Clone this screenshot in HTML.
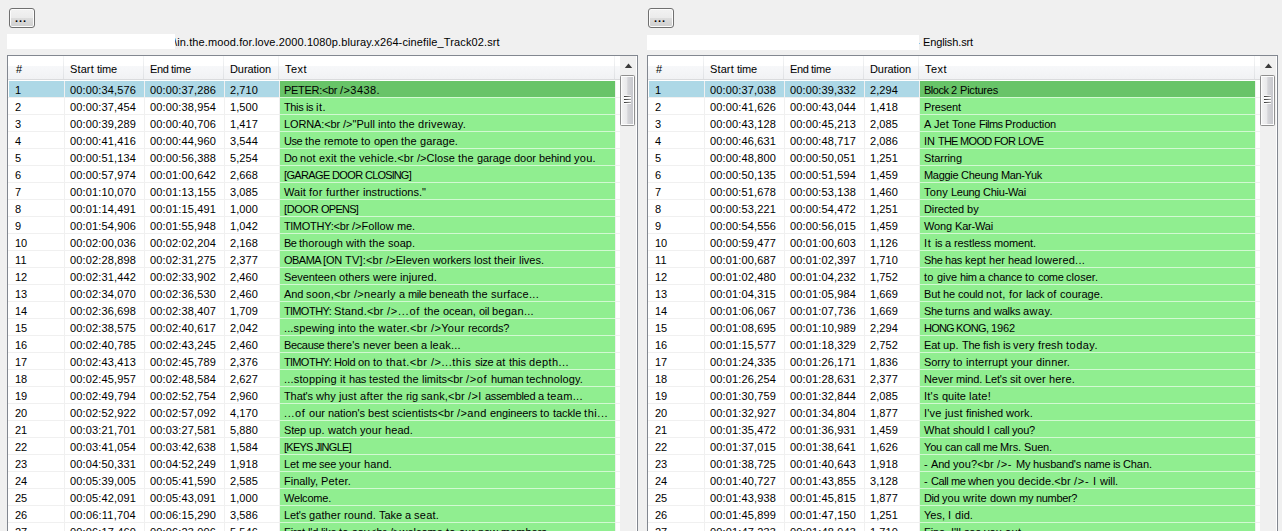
<!DOCTYPE html>
<html><head><meta charset="utf-8"><title>Compare subtitles</title>
<style>
html,body{margin:0;padding:0}
body{width:1282px;height:531px;overflow:hidden;background:#f0f0f0;position:relative;
 font-family:"Liberation Sans",sans-serif;font-size:11px;color:#000;}
.abs{position:absolute}
.btn{position:absolute;top:8px;width:24px;height:18px;border:1px solid #707070;border-radius:3px;
 background:linear-gradient(#f2f2f2 0%,#ebebeb 48%,#dddddd 50%,#cfcfcf 100%);
 box-shadow:inset 0 0 0 1px #fcfcfc;}
.btn span{position:absolute;left:5px;top:2px;line-height:14px;letter-spacing:1px;font-weight:bold}
.lbl{position:absolute;height:15px;line-height:17px;white-space:nowrap}
.lbl .t{position:absolute;white-space:pre}
.lbl .red{position:absolute;left:0;top:0;height:15px;background:#fff}
.lv{position:absolute;top:55px;width:629px;height:480px;border:1px solid #828790;background:#fff;overflow:hidden}
.hdr{position:absolute;left:0;top:0;height:23px;width:612px;background:linear-gradient(#fff 0px,#fff 10px,#f7f8fa 10px,#f1f2f4 23px);border-bottom:1px solid #dadbdd}
.hc{position:absolute;top:0;height:23px;line-height:26px;box-sizing:border-box;padding-left:6px;white-space:nowrap;overflow:hidden;color:#000}
.hc:after{content:'';position:absolute;right:0;top:0;width:1px;height:23px;background:linear-gradient(#f4f5f6,#dfe1e4)}
.hc:first-child{padding-left:8px}
.row{position:absolute;left:0;height:17px;width:612px;}
.c{position:absolute;top:0;height:16px;line-height:18px;box-sizing:border-box;padding-left:5px;white-space:nowrap;overflow:hidden;}
.c0{padding-left:6px}
.row{border-bottom:0}
.gl{position:absolute;left:0;width:612px;height:1px;background:#f0f0f0}
.c0{left:1px;width:55px}
.c1{left:57px;width:79px}
.c2{left:137px;width:79px}
.c3{left:217px;width:54px}
.c4{left:272px;width:335px;height:17px;background:#90ee90;padding-left:4px;border-bottom:1px solid #d2f9d2;z-index:2}
.vg{position:absolute;top:25px;width:1px;height:460px;background:#f0f0f0}
.sel .c0,.sel .c1,.sel .c2,.sel .c3{background:#add8e6}
.sel .c4{background:#68c468}
.sb{position:absolute;left:612px;top:0;width:16px;height:480px;background:#f0f0f0}
.thumb{position:absolute;left:0px;top:19px;width:13px;height:49px;border:1px solid #8f8f8f;border-radius:1.5px;
 background:linear-gradient(90deg,#f4f4f4 0%,#e9e9eb 45%,#d5d5d9 52%,#c3c4ca 100%);box-shadow:inset 0 0 0 1px #fdfdfd}
.grip{position:absolute;left:3px;width:7px;height:1px;background:linear-gradient(90deg,#333 0%,#666 50%,#aaa 100%);box-shadow:0 1px 0 #fff, 0 -1px 0 rgba(255,255,255,.6)}
.arrow{position:absolute;left:0;top:0}
</style></head>
<body>
<div class="btn" style="left:9px"><span>...</span></div>
<div class="btn" style="left:648px"><span>...</span></div>
<div class="lbl" style="left:7px;top:34px;width:630px"><span class="t" style="left:167px;top:0"><span style="letter-spacing:0.12px">\in.the.mood.for.love.2000.1080p.bluray.x264-cinefile_Track02.srt</span></span><div class="red" style="width:168px"></div></div>
<div class="lbl" style="left:647px;top:35px;width:630px"><span class="t" style="left:269px;top:-1px"><span style="letter-spacing:0.13px">- </span><span style="letter-spacing:-0.12px">English.srt</span></span><div class="red" style="width:272px"></div></div>
<div class="lv" style="left:7px">
<div class="hdr">
<div class="hc" style="left:0px;width:56px"><span style="letter-spacing:1.88px">#</span></div>
<div class="hc" style="left:56px;width:80px"><span style="letter-spacing:0.12px">Start </span><span style="letter-spacing:-0.2px">time</span></div>
<div class="hc" style="left:136px;width:80px"><span style="letter-spacing:-0.41px">End </span><span style="letter-spacing:-0.2px">time</span></div>
<div class="hc" style="left:216px;width:55px"><span style="letter-spacing:-0.07px">Duration</span></div>
<div class="hc" style="left:271px;width:336px"><span style="letter-spacing:0.45px">Text</span></div>
</div>
<div class="row sel" style="top:25px">
<div class="c c0"><span style="letter-spacing:-0.12px">1</span></div>
<div class="c c1"><span style="letter-spacing:0.15px">00:00:34,576</span></div>
<div class="c c2"><span style="letter-spacing:0.15px">00:00:37,286</span></div>
<div class="c c3"><span style="letter-spacing:0.09px">2,710</span></div>
<div class="c c4"><span style="letter-spacing:-0.3px">PETER:&lt;br </span><span style="letter-spacing:0.43px">/&gt;3438.</span></div>
</div>
<div class="gl" style="top:41px"></div>
<div class="row" style="top:42px">
<div class="c c0"><span style="letter-spacing:-0.12px">2</span></div>
<div class="c c1"><span style="letter-spacing:0.15px">00:00:37,454</span></div>
<div class="c c2"><span style="letter-spacing:0.15px">00:00:38,954</span></div>
<div class="c c3"><span style="letter-spacing:0.09px">1,500</span></div>
<div class="c c4"><span style="letter-spacing:-0.37px">This </span><span style="letter-spacing:-0.33px">is </span><span style="letter-spacing:0.48px">it.</span></div>
</div>
<div class="gl" style="top:58px"></div>
<div class="row" style="top:59px">
<div class="c c0"><span style="letter-spacing:-0.12px">3</span></div>
<div class="c c1"><span style="letter-spacing:0.15px">00:00:39,289</span></div>
<div class="c c2"><span style="letter-spacing:0.15px">00:00:40,706</span></div>
<div class="c c3"><span style="letter-spacing:0.09px">1,417</span></div>
<div class="c c4"><span style="letter-spacing:-0.12px">LORNA:&lt;br </span><span style="letter-spacing:0.03px">/&gt;&quot;Pull </span><span style="letter-spacing:0.04px">into </span><span style="letter-spacing:0.16px">the </span><span style="letter-spacing:0.26px">driveway.</span></div>
</div>
<div class="gl" style="top:75px"></div>
<div class="row" style="top:76px">
<div class="c c0"><span style="letter-spacing:-0.12px">4</span></div>
<div class="c c1"><span style="letter-spacing:0.15px">00:00:41,416</span></div>
<div class="c c2"><span style="letter-spacing:0.15px">00:00:44,960</span></div>
<div class="c c3"><span style="letter-spacing:0.09px">3,544</span></div>
<div class="c c4"><span style="letter-spacing:-0.41px">Use </span><span style="letter-spacing:0.16px">the </span><span style="letter-spacing:-0.04px">remote </span><span style="letter-spacing:0.26px">to </span><span style="letter-spacing:-0.11px">open </span><span style="letter-spacing:0.16px">the </span><span style="letter-spacing:0.1px">garage.</span></div>
</div>
<div class="gl" style="top:92px"></div>
<div class="row" style="top:93px">
<div class="c c0"><span style="letter-spacing:-0.12px">5</span></div>
<div class="c c1"><span style="letter-spacing:0.15px">00:00:51,134</span></div>
<div class="c c2"><span style="letter-spacing:0.15px">00:00:56,388</span></div>
<div class="c c3"><span style="letter-spacing:0.09px">5,254</span></div>
<div class="c c4"><span style="letter-spacing:-0.38px">Do </span><span style="letter-spacing:0.16px">not </span><span style="letter-spacing:0.16px">exit </span><span style="letter-spacing:0.16px">the </span><span style="letter-spacing:0.12px">vehicle.&lt;br </span><span style="letter-spacing:0.04px">/&gt;Close </span><span style="letter-spacing:0.16px">the </span><span style="letter-spacing:-0.04px">garage </span><span style="letter-spacing:-0.02px">door </span><span style="letter-spacing:-0.16px">behind </span><span style="letter-spacing:0.3px">you.</span></div>
</div>
<div class="gl" style="top:109px"></div>
<div class="row" style="top:110px">
<div class="c c0"><span style="letter-spacing:-0.12px">6</span></div>
<div class="c c1"><span style="letter-spacing:0.15px">00:00:57,974</span></div>
<div class="c c2"><span style="letter-spacing:0.15px">00:01:00,642</span></div>
<div class="c c3"><span style="letter-spacing:0.09px">2,668</span></div>
<div class="c c4"><span style="letter-spacing:-0.65px">[GARAGE </span><span style="letter-spacing:-0.61px">DOOR </span><span style="letter-spacing:-0.75px">CLOSlNG]</span></div>
</div>
<div class="gl" style="top:126px"></div>
<div class="row" style="top:127px">
<div class="c c0"><span style="letter-spacing:-0.12px">7</span></div>
<div class="c c1"><span style="letter-spacing:0.15px">00:01:10,070</span></div>
<div class="c c2"><span style="letter-spacing:0.15px">00:01:13,155</span></div>
<div class="c c3"><span style="letter-spacing:0.09px">3,085</span></div>
<div class="c c4"><span style="letter-spacing:0.07px">Wait </span><span style="letter-spacing:0.27px">for </span><span style="letter-spacing:0.27px">further </span><span style="letter-spacing:0.03px">instructions.&quot;</span></div>
</div>
<div class="gl" style="top:143px"></div>
<div class="row" style="top:144px">
<div class="c c0"><span style="letter-spacing:-0.12px">8</span></div>
<div class="c c1"><span style="letter-spacing:0.15px">00:01:14,491</span></div>
<div class="c c2"><span style="letter-spacing:0.15px">00:01:15,491</span></div>
<div class="c c3"><span style="letter-spacing:0.09px">1,000</span></div>
<div class="c c4"><span style="letter-spacing:-0.35px">[DOOR </span><span style="letter-spacing:-0.76px">OPENS]</span></div>
</div>
<div class="gl" style="top:160px"></div>
<div class="row" style="top:161px">
<div class="c c0"><span style="letter-spacing:-0.12px">9</span></div>
<div class="c c1"><span style="letter-spacing:0.15px">00:01:54,906</span></div>
<div class="c c2"><span style="letter-spacing:0.15px">00:01:55,948</span></div>
<div class="c c3"><span style="letter-spacing:0.09px">1,042</span></div>
<div class="c c4"><span style="letter-spacing:-0.22px">TlMOTHY:&lt;br </span><span style="letter-spacing:0.07px">/&gt;Follow </span><span style="letter-spacing:-0.11px">me.</span></div>
</div>
<div class="gl" style="top:177px"></div>
<div class="row" style="top:178px">
<div class="c c0"><span style="letter-spacing:-0.12px">10</span></div>
<div class="c c1"><span style="letter-spacing:0.15px">00:02:00,036</span></div>
<div class="c c2"><span style="letter-spacing:0.15px">00:02:02,204</span></div>
<div class="c c3"><span style="letter-spacing:0.09px">2,168</span></div>
<div class="c c4"><span style="letter-spacing:-0.51px">Be </span><span style="letter-spacing:0.06px">thorough </span><span style="letter-spacing:0.07px">with </span><span style="letter-spacing:0.16px">the </span><span style="letter-spacing:0.02px">soap.</span></div>
</div>
<div class="gl" style="top:194px"></div>
<div class="row" style="top:195px">
<div class="c c0"><span style="letter-spacing:0.29px">11</span></div>
<div class="c c1"><span style="letter-spacing:0.15px">00:02:28,898</span></div>
<div class="c c2"><span style="letter-spacing:0.15px">00:02:31,275</span></div>
<div class="c c3"><span style="letter-spacing:0.09px">2,377</span></div>
<div class="c c4"><span style="letter-spacing:-0.53px">OBAMA </span><span style="letter-spacing:-0.16px">[ON </span><span style="letter-spacing:0.2px">TV]:&lt;br </span><span style="letter-spacing:0.09px">/&gt;Eleven </span><span style="letter-spacing:-0.07px">workers </span><span style="letter-spacing:-0.04px">lost </span><span style="letter-spacing:0.09px">their </span><span style="letter-spacing:-0.01px">lives.</span></div>
</div>
<div class="gl" style="top:211px"></div>
<div class="row" style="top:212px">
<div class="c c0"><span style="letter-spacing:-0.12px">12</span></div>
<div class="c c1"><span style="letter-spacing:0.15px">00:02:31,442</span></div>
<div class="c c2"><span style="letter-spacing:0.15px">00:02:33,902</span></div>
<div class="c c3"><span style="letter-spacing:0.09px">2,460</span></div>
<div class="c c4"><span style="letter-spacing:-0.07px">Seventeen </span><span style="letter-spacing:0.05px">others </span><span style="letter-spacing:0.02px">were </span><span style="letter-spacing:0.12px">injured.</span></div>
</div>
<div class="gl" style="top:228px"></div>
<div class="row" style="top:229px">
<div class="c c0"><span style="letter-spacing:-0.12px">13</span></div>
<div class="c c1"><span style="letter-spacing:0.15px">00:02:34,070</span></div>
<div class="c c2"><span style="letter-spacing:0.15px">00:02:36,530</span></div>
<div class="c c3"><span style="letter-spacing:0.09px">2,460</span></div>
<div class="c c4"><span style="letter-spacing:-0.16px">And </span><span style="letter-spacing:0.2px">soon,&lt;br </span><span style="letter-spacing:0.28px">/&gt;nearly </span><span style="letter-spacing:-0.09px">a </span><span style="letter-spacing:-0.45px">mile </span><span style="letter-spacing:0.02px">beneath </span><span style="letter-spacing:0.16px">the </span><span style="letter-spacing:0.28px">surface...</span></div>
</div>
<div class="gl" style="top:245px"></div>
<div class="row" style="top:246px">
<div class="c c0"><span style="letter-spacing:-0.12px">14</span></div>
<div class="c c1"><span style="letter-spacing:0.15px">00:02:36,698</span></div>
<div class="c c2"><span style="letter-spacing:0.15px">00:02:38,407</span></div>
<div class="c c3"><span style="letter-spacing:0.09px">1,709</span></div>
<div class="c c4"><span style="letter-spacing:-0.49px">TlMOTHY: </span><span style="letter-spacing:0.19px">Stand.&lt;br </span><span style="letter-spacing:0.76px">/&gt;...of </span><span style="letter-spacing:0.16px">the </span><span style="letter-spacing:-0.01px">ocean, </span><span style="letter-spacing:-0.27px">oil </span><span style="letter-spacing:0.28px">began...</span></div>
</div>
<div class="gl" style="top:262px"></div>
<div class="row" style="top:263px">
<div class="c c0"><span style="letter-spacing:-0.12px">15</span></div>
<div class="c c1"><span style="letter-spacing:0.15px">00:02:38,575</span></div>
<div class="c c2"><span style="letter-spacing:0.15px">00:02:40,617</span></div>
<div class="c c3"><span style="letter-spacing:0.09px">2,042</span></div>
<div class="c c4"><span style="letter-spacing:0.13px">...spewing </span><span style="letter-spacing:0.04px">into </span><span style="letter-spacing:0.16px">the </span><span style="letter-spacing:0.44px">water.&lt;br </span><span style="letter-spacing:0.32px">/&gt;Your </span><span style="letter-spacing:-0.22px">records?</span></div>
</div>
<div class="gl" style="top:279px"></div>
<div class="row" style="top:280px">
<div class="c c0"><span style="letter-spacing:-0.12px">16</span></div>
<div class="c c1"><span style="letter-spacing:0.15px">00:02:40,785</span></div>
<div class="c c2"><span style="letter-spacing:0.15px">00:02:43,245</span></div>
<div class="c c3"><span style="letter-spacing:0.09px">2,460</span></div>
<div class="c c4"><span style="letter-spacing:-0.36px">Because </span><span style="letter-spacing:0.03px">there&#x27;s </span><span style="letter-spacing:0.07px">never </span><span style="letter-spacing:-0.11px">been </span><span style="letter-spacing:-0.09px">a </span><span style="letter-spacing:0.23px">leak...</span></div>
</div>
<div class="gl" style="top:296px"></div>
<div class="row" style="top:297px">
<div class="c c0"><span style="letter-spacing:-0.12px">17</span></div>
<div class="c c1"><span style="letter-spacing:0.15px">00:02:43,413</span></div>
<div class="c c2"><span style="letter-spacing:0.15px">00:02:45,789</span></div>
<div class="c c3"><span style="letter-spacing:0.09px">2,376</span></div>
<div class="c c4"><span style="letter-spacing:-0.49px">TlMOTHY: </span><span style="letter-spacing:-0.34px">Hold </span><span style="letter-spacing:-0.1px">on </span><span style="letter-spacing:0.26px">to </span><span style="letter-spacing:0.48px">that.&lt;br </span><span style="letter-spacing:0.52px">/&gt;...this </span><span style="letter-spacing:-0.33px">size </span><span style="letter-spacing:0.26px">at </span><span style="letter-spacing:-0.04px">this </span><span style="letter-spacing:0.41px">depth...</span></div>
</div>
<div class="gl" style="top:313px"></div>
<div class="row" style="top:314px">
<div class="c c0"><span style="letter-spacing:-0.12px">18</span></div>
<div class="c c1"><span style="letter-spacing:0.15px">00:02:45,957</span></div>
<div class="c c2"><span style="letter-spacing:0.15px">00:02:48,584</span></div>
<div class="c c3"><span style="letter-spacing:0.09px">2,627</span></div>
<div class="c c4"><span style="letter-spacing:0.18px">...stopping </span><span style="letter-spacing:0.15px">it </span><span style="letter-spacing:-0.2px">has </span><span style="letter-spacing:0.14px">tested </span><span style="letter-spacing:0.16px">the </span><span style="letter-spacing:-0.03px">limits&lt;br </span><span style="letter-spacing:0.66px">/&gt;of </span><span style="letter-spacing:-0.28px">human </span><span style="letter-spacing:0.14px">technology.</span></div>
</div>
<div class="gl" style="top:330px"></div>
<div class="row" style="top:331px">
<div class="c c0"><span style="letter-spacing:-0.12px">19</span></div>
<div class="c c1"><span style="letter-spacing:0.15px">00:02:49,794</span></div>
<div class="c c2"><span style="letter-spacing:0.15px">00:02:52,754</span></div>
<div class="c c3"><span style="letter-spacing:0.09px">2,960</span></div>
<div class="c c4"><span style="letter-spacing:-0.1px">That&#x27;s </span><span style="letter-spacing:0.09px">why </span><span style="letter-spacing:0.16px">just </span><span style="letter-spacing:0.32px">after </span><span style="letter-spacing:0.16px">the </span><span style="letter-spacing:-0.07px">rig </span><span style="letter-spacing:0.16px">sank,&lt;br </span><span style="letter-spacing:0.5px">/&gt;l </span><span style="letter-spacing:-0.33px">assembled </span><span style="letter-spacing:-0.09px">a </span><span style="letter-spacing:0.34px">team...</span></div>
</div>
<div class="gl" style="top:347px"></div>
<div class="row" style="top:348px">
<div class="c c0"><span style="letter-spacing:-0.12px">20</span></div>
<div class="c c1"><span style="letter-spacing:0.15px">00:02:52,922</span></div>
<div class="c c2"><span style="letter-spacing:0.15px">00:02:57,092</span></div>
<div class="c c3"><span style="letter-spacing:0.09px">4,170</span></div>
<div class="c c4"><span style="letter-spacing:0.6px">...of </span><span style="letter-spacing:0.01px">our </span><span style="letter-spacing:-0.07px">nation&#x27;s </span><span style="letter-spacing:0.03px">best </span><span style="letter-spacing:0.04px">scientists&lt;br </span><span style="letter-spacing:0.35px">/&gt;and </span><span style="letter-spacing:-0.14px">engineers </span><span style="letter-spacing:0.26px">to </span><span style="letter-spacing:-0.11px">tackle </span><span style="letter-spacing:0.53px">thi...</span></div>
</div>
<div class="gl" style="top:364px"></div>
<div class="row" style="top:365px">
<div class="c c0"><span style="letter-spacing:-0.12px">21</span></div>
<div class="c c1"><span style="letter-spacing:0.15px">00:03:21,701</span></div>
<div class="c c2"><span style="letter-spacing:0.15px">00:03:27,581</span></div>
<div class="c c3"><span style="letter-spacing:0.09px">5,880</span></div>
<div class="c c4"><span style="letter-spacing:-0.14px">Step </span><span style="letter-spacing:0.16px">up. </span><span style="letter-spacing:0.03px">watch </span><span style="letter-spacing:0.11px">your </span><span style="letter-spacing:0.09px">head.</span></div>
</div>
<div class="gl" style="top:381px"></div>
<div class="row" style="top:382px">
<div class="c c0"><span style="letter-spacing:-0.12px">22</span></div>
<div class="c c1"><span style="letter-spacing:0.15px">00:03:41,054</span></div>
<div class="c c2"><span style="letter-spacing:0.15px">00:03:42,638</span></div>
<div class="c c3"><span style="letter-spacing:0.09px">1,584</span></div>
<div class="c c4"><span style="letter-spacing:-0.74px">[KEYS </span><span style="letter-spacing:-0.71px">JlNGLE]</span></div>
</div>
<div class="gl" style="top:398px"></div>
<div class="row" style="top:399px">
<div class="c c0"><span style="letter-spacing:-0.12px">23</span></div>
<div class="c c1"><span style="letter-spacing:0.15px">00:04:50,331</span></div>
<div class="c c2"><span style="letter-spacing:0.15px">00:04:52,249</span></div>
<div class="c c3"><span style="letter-spacing:0.09px">1,918</span></div>
<div class="c c4"><span style="letter-spacing:-0.09px">Let </span><span style="letter-spacing:-0.45px">me </span><span style="letter-spacing:-0.2px">see </span><span style="letter-spacing:0.11px">your </span><span style="letter-spacing:0.09px">hand.</span></div>
</div>
<div class="gl" style="top:415px"></div>
<div class="row" style="top:416px">
<div class="c c0"><span style="letter-spacing:-0.12px">24</span></div>
<div class="c c1"><span style="letter-spacing:0.15px">00:05:39,005</span></div>
<div class="c c2"><span style="letter-spacing:0.15px">00:05:41,590</span></div>
<div class="c c3"><span style="letter-spacing:0.09px">2,585</span></div>
<div class="c c4"><span style="letter-spacing:-0.01px">Finally, </span><span style="letter-spacing:0.21px">Peter.</span></div>
</div>
<div class="gl" style="top:432px"></div>
<div class="row" style="top:433px">
<div class="c c0"><span style="letter-spacing:-0.12px">25</span></div>
<div class="c c1"><span style="letter-spacing:0.15px">00:05:42,091</span></div>
<div class="c c2"><span style="letter-spacing:0.15px">00:05:43,091</span></div>
<div class="c c3"><span style="letter-spacing:0.09px">1,000</span></div>
<div class="c c4"><span style="letter-spacing:-0.21px">Welcome.</span></div>
</div>
<div class="gl" style="top:449px"></div>
<div class="row" style="top:450px">
<div class="c c0"><span style="letter-spacing:-0.12px">26</span></div>
<div class="c c1"><span style="letter-spacing:0.21px">00:06:11,704</span></div>
<div class="c c2"><span style="letter-spacing:0.15px">00:06:15,290</span></div>
<div class="c c3"><span style="letter-spacing:0.09px">3,586</span></div>
<div class="c c4"><span style="letter-spacing:-0.16px">Let&#x27;s </span><span style="letter-spacing:0.11px">gather </span><span style="letter-spacing:0.11px">round. </span><span style="letter-spacing:-0.06px">Take </span><span style="letter-spacing:-0.09px">a </span><span style="letter-spacing:0.23px">seat.</span></div>
</div>
<div class="gl" style="top:466px"></div>
<div class="row" style="top:467px">
<div class="c c0"><span style="letter-spacing:-0.12px">27</span></div>
<div class="c c1"><span style="letter-spacing:0.15px">00:06:17,460</span></div>
<div class="c c2"><span style="letter-spacing:0.15px">00:06:23,006</span></div>
<div class="c c3"><span style="letter-spacing:0.09px">5,546</span></div>
<div class="c c4"><span style="letter-spacing:-0.08px">First </span><span style="letter-spacing:-0.18px">l&#x27;d </span><span style="letter-spacing:-0.31px">like </span><span style="letter-spacing:0.26px">to </span><span style="letter-spacing:0.23px">say&lt;br </span>/&gt;welcome <span style="letter-spacing:0.26px">to </span><span style="letter-spacing:0.01px">our </span><span style="letter-spacing:-0.06px">new </span>members...</div>
</div>
<div class="gl" style="top:483px"></div>
<div class="vg" style="left:56px"></div>
<div class="vg" style="left:136px"></div>
<div class="vg" style="left:216px"></div>
<div class="vg" style="left:271px"></div>
<div class="vg" style="left:607px"></div>
<div class="sb"><svg class="arrow" width="17" height="17" viewBox="0 0 17 17"><polygon points="8.5,7.6 12.2,12 4.8,12" fill="#3a3a3a"/></svg>
<div class="thumb" style="top:19px">
<div class="grip" style="top:20px"></div>
<div class="grip" style="top:23px"></div>
<div class="grip" style="top:26px"></div>
</div></div>
</div>
<div class="lv" style="left:647px">
<div class="hdr">
<div class="hc" style="left:0px;width:56px"><span style="letter-spacing:1.88px">#</span></div>
<div class="hc" style="left:56px;width:80px"><span style="letter-spacing:0.12px">Start </span><span style="letter-spacing:-0.2px">time</span></div>
<div class="hc" style="left:136px;width:80px"><span style="letter-spacing:-0.41px">End </span><span style="letter-spacing:-0.2px">time</span></div>
<div class="hc" style="left:216px;width:55px"><span style="letter-spacing:-0.07px">Duration</span></div>
<div class="hc" style="left:271px;width:336px"><span style="letter-spacing:0.45px">Text</span></div>
</div>
<div class="row sel" style="top:25px">
<div class="c c0"><span style="letter-spacing:-0.12px">1</span></div>
<div class="c c1"><span style="letter-spacing:0.15px">00:00:37,038</span></div>
<div class="c c2"><span style="letter-spacing:0.15px">00:00:39,332</span></div>
<div class="c c3"><span style="letter-spacing:0.09px">2,294</span></div>
<div class="c c4"><span style="letter-spacing:-0.49px">Block </span><span style="letter-spacing:-0.09px">2 </span><span style="letter-spacing:-0.22px">Pictures</span></div>
</div>
<div class="gl" style="top:41px"></div>
<div class="row" style="top:42px">
<div class="c c0"><span style="letter-spacing:-0.12px">2</span></div>
<div class="c c1"><span style="letter-spacing:0.15px">00:00:41,626</span></div>
<div class="c c2"><span style="letter-spacing:0.15px">00:00:43,044</span></div>
<div class="c c3"><span style="letter-spacing:0.09px">1,418</span></div>
<div class="c c4"><span style="letter-spacing:-0.13px">Present</span></div>
</div>
<div class="gl" style="top:58px"></div>
<div class="row" style="top:59px">
<div class="c c0"><span style="letter-spacing:-0.12px">3</span></div>
<div class="c c1"><span style="letter-spacing:0.15px">00:00:43,128</span></div>
<div class="c c2"><span style="letter-spacing:0.15px">00:00:45,213</span></div>
<div class="c c3"><span style="letter-spacing:0.09px">2,085</span></div>
<div class="c c4"><span style="letter-spacing:0.1px">A </span><span style="letter-spacing:0.07px">Jet </span><span style="letter-spacing:0.02px">Tone </span><span style="letter-spacing:-0.55px">Films </span><span style="letter-spacing:-0.16px">Production</span></div>
</div>
<div class="gl" style="top:75px"></div>
<div class="row" style="top:76px">
<div class="c c0"><span style="letter-spacing:-0.12px">4</span></div>
<div class="c c1"><span style="letter-spacing:0.15px">00:00:46,631</span></div>
<div class="c c2"><span style="letter-spacing:0.15px">00:00:48,717</span></div>
<div class="c c3"><span style="letter-spacing:0.09px">2,086</span></div>
<div class="c c4"><span style="letter-spacing:-0.02px">IN </span><span style="letter-spacing:-0.77px">THE </span><span style="letter-spacing:-0.66px">MOOD </span><span style="letter-spacing:-0.57px">FOR </span><span style="letter-spacing:-1.09px">LOVE</span></div>
</div>
<div class="gl" style="top:92px"></div>
<div class="row" style="top:93px">
<div class="c c0"><span style="letter-spacing:-0.12px">5</span></div>
<div class="c c1"><span style="letter-spacing:0.15px">00:00:48,800</span></div>
<div class="c c2"><span style="letter-spacing:0.15px">00:00:50,051</span></div>
<div class="c c3"><span style="letter-spacing:0.09px">1,251</span></div>
<div class="c c4"><span style="letter-spacing:-0.07px">Starring</span></div>
</div>
<div class="gl" style="top:109px"></div>
<div class="row" style="top:110px">
<div class="c c0"><span style="letter-spacing:-0.12px">6</span></div>
<div class="c c1"><span style="letter-spacing:0.15px">00:00:50,135</span></div>
<div class="c c2"><span style="letter-spacing:0.15px">00:00:51,594</span></div>
<div class="c c3"><span style="letter-spacing:0.09px">1,459</span></div>
<div class="c c4"><span style="letter-spacing:-0.31px">Maggie </span><span style="letter-spacing:-0.23px">Cheung </span><span style="letter-spacing:-0.35px">Man-Yuk</span></div>
</div>
<div class="gl" style="top:126px"></div>
<div class="row" style="top:127px">
<div class="c c0"><span style="letter-spacing:-0.12px">7</span></div>
<div class="c c1"><span style="letter-spacing:0.15px">00:00:51,678</span></div>
<div class="c c2"><span style="letter-spacing:0.15px">00:00:53,138</span></div>
<div class="c c3"><span style="letter-spacing:0.09px">1,460</span></div>
<div class="c c4"><span style="letter-spacing:0.14px">Tony </span><span style="letter-spacing:-0.28px">Leung </span><span style="letter-spacing:-0.23px">Chiu-Wai</span></div>
</div>
<div class="gl" style="top:143px"></div>
<div class="row" style="top:144px">
<div class="c c0"><span style="letter-spacing:-0.12px">8</span></div>
<div class="c c1"><span style="letter-spacing:0.15px">00:00:53,221</span></div>
<div class="c c2"><span style="letter-spacing:0.15px">00:00:54,472</span></div>
<div class="c c3"><span style="letter-spacing:0.09px">1,251</span></div>
<div class="c c4"><span style="letter-spacing:-0.11px">Directed </span><span style="letter-spacing:0.19px">by</span></div>
</div>
<div class="gl" style="top:160px"></div>
<div class="row" style="top:161px">
<div class="c c0"><span style="letter-spacing:-0.12px">9</span></div>
<div class="c c1"><span style="letter-spacing:0.15px">00:00:54,556</span></div>
<div class="c c2"><span style="letter-spacing:0.15px">00:00:56,015</span></div>
<div class="c c3"><span style="letter-spacing:0.09px">1,459</span></div>
<div class="c c4"><span style="letter-spacing:-0.12px">Wong </span><span style="letter-spacing:-0.19px">Kar-Wai</span></div>
</div>
<div class="gl" style="top:177px"></div>
<div class="row" style="top:178px">
<div class="c c0"><span style="letter-spacing:-0.12px">10</span></div>
<div class="c c1"><span style="letter-spacing:0.15px">00:00:59,477</span></div>
<div class="c c2"><span style="letter-spacing:0.15px">00:01:00,603</span></div>
<div class="c c3"><span style="letter-spacing:0.09px">1,126</span></div>
<div class="c c4"><span style="letter-spacing:0.61px">It </span><span style="letter-spacing:-0.33px">is </span><span style="letter-spacing:-0.09px">a </span><span style="letter-spacing:-0.11px">restless </span><span style="letter-spacing:-0.11px">moment.</span></div>
</div>
<div class="gl" style="top:194px"></div>
<div class="row" style="top:195px">
<div class="c c0"><span style="letter-spacing:0.29px">11</span></div>
<div class="c c1"><span style="letter-spacing:0.15px">00:01:00,687</span></div>
<div class="c c2"><span style="letter-spacing:0.15px">00:01:02,397</span></div>
<div class="c c3"><span style="letter-spacing:0.09px">1,710</span></div>
<div class="c c4"><span style="letter-spacing:-0.41px">She </span><span style="letter-spacing:-0.2px">has </span><span style="letter-spacing:0.03px">kept </span><span style="letter-spacing:0.01px">her </span><span style="letter-spacing:-0.11px">head </span><span style="letter-spacing:0.23px">lowered...</span></div>
</div>
<div class="gl" style="top:211px"></div>
<div class="row" style="top:212px">
<div class="c c0"><span style="letter-spacing:-0.12px">12</span></div>
<div class="c c1"><span style="letter-spacing:0.15px">00:01:02,480</span></div>
<div class="c c2"><span style="letter-spacing:0.15px">00:01:04,232</span></div>
<div class="c c3"><span style="letter-spacing:0.09px">1,752</span></div>
<div class="c c4"><span style="letter-spacing:0.26px">to </span><span style="letter-spacing:-0.05px">give </span><span style="letter-spacing:-0.45px">him </span><span style="letter-spacing:-0.09px">a </span><span style="letter-spacing:-0.22px">chance </span><span style="letter-spacing:0.26px">to </span><span style="letter-spacing:-0.39px">come </span><span style="letter-spacing:0.03px">closer.</span></div>
</div>
<div class="gl" style="top:228px"></div>
<div class="row" style="top:229px">
<div class="c c0"><span style="letter-spacing:-0.12px">13</span></div>
<div class="c c1"><span style="letter-spacing:0.15px">00:01:04,315</span></div>
<div class="c c2"><span style="letter-spacing:0.15px">00:01:05,984</span></div>
<div class="c c3"><span style="letter-spacing:0.09px">1,669</span></div>
<div class="c c4"><span style="letter-spacing:-0.14px">But </span><span style="letter-spacing:-0.1px">he </span><span style="letter-spacing:-0.23px">could </span><span style="letter-spacing:0.32px">not, </span><span style="letter-spacing:0.27px">for </span><span style="letter-spacing:-0.33px">lack </span><span style="letter-spacing:0.26px">of </span><span style="letter-spacing:0.02px">courage.</span></div>
</div>
<div class="gl" style="top:245px"></div>
<div class="row" style="top:246px">
<div class="c c0"><span style="letter-spacing:-0.12px">14</span></div>
<div class="c c1"><span style="letter-spacing:0.15px">00:01:06,067</span></div>
<div class="c c2"><span style="letter-spacing:0.15px">00:01:07,736</span></div>
<div class="c c3"><span style="letter-spacing:0.09px">1,669</span></div>
<div class="c c4"><span style="letter-spacing:-0.41px">She </span><span style="letter-spacing:0.08px">turns </span><span style="letter-spacing:-0.11px">and </span><span style="letter-spacing:-0.26px">walks </span><span style="letter-spacing:0.42px">away.</span></div>
</div>
<div class="gl" style="top:262px"></div>
<div class="row" style="top:263px">
<div class="c c0"><span style="letter-spacing:-0.12px">15</span></div>
<div class="c c1"><span style="letter-spacing:0.15px">00:01:08,695</span></div>
<div class="c c2"><span style="letter-spacing:0.15px">00:01:10,989</span></div>
<div class="c c3"><span style="letter-spacing:0.09px">2,294</span></div>
<div class="c c4"><span style="letter-spacing:-0.81px">HONG </span><span style="letter-spacing:-0.59px">KONG, </span><span style="letter-spacing:-0.12px">1962</span></div>
</div>
<div class="gl" style="top:279px"></div>
<div class="row" style="top:280px">
<div class="c c0"><span style="letter-spacing:-0.12px">16</span></div>
<div class="c c1"><span style="letter-spacing:0.15px">00:01:15,577</span></div>
<div class="c c2"><span style="letter-spacing:0.15px">00:01:18,329</span></div>
<div class="c c3"><span style="letter-spacing:0.09px">2,752</span></div>
<div class="c c4"><span style="letter-spacing:-0.14px">Eat </span><span style="letter-spacing:0.16px">up. </span><span style="letter-spacing:-0.25px">The </span><span style="letter-spacing:-0.04px">fish </span><span style="letter-spacing:-0.33px">is </span><span style="letter-spacing:0.23px">very </span><span style="letter-spacing:0.08px">fresh </span><span style="letter-spacing:0.47px">today.</span></div>
</div>
<div class="gl" style="top:296px"></div>
<div class="row" style="top:297px">
<div class="c c0"><span style="letter-spacing:-0.12px">17</span></div>
<div class="c c1"><span style="letter-spacing:0.15px">00:01:24,335</span></div>
<div class="c c2"><span style="letter-spacing:0.15px">00:01:26,171</span></div>
<div class="c c3"><span style="letter-spacing:0.09px">1,836</span></div>
<div class="c c4"><span style="letter-spacing:-0.06px">Sorry </span><span style="letter-spacing:0.26px">to </span><span style="letter-spacing:0.16px">interrupt </span><span style="letter-spacing:0.11px">your </span><span style="letter-spacing:0.14px">dinner.</span></div>
</div>
<div class="gl" style="top:313px"></div>
<div class="row" style="top:314px">
<div class="c c0"><span style="letter-spacing:-0.12px">18</span></div>
<div class="c c1"><span style="letter-spacing:0.15px">00:01:26,254</span></div>
<div class="c c2"><span style="letter-spacing:0.15px">00:01:28,631</span></div>
<div class="c c3"><span style="letter-spacing:0.09px">2,377</span></div>
<div class="c c4"><span style="letter-spacing:-0.07px">Never </span><span style="letter-spacing:-0.16px">mind. </span><span style="letter-spacing:-0.16px">Let&#x27;s </span><span style="letter-spacing:-0.02px">sit </span><span style="letter-spacing:0.11px">over </span><span style="letter-spacing:0.18px">here.</span></div>
</div>
<div class="gl" style="top:330px"></div>
<div class="row" style="top:331px">
<div class="c c0"><span style="letter-spacing:-0.12px">19</span></div>
<div class="c c1"><span style="letter-spacing:0.15px">00:01:30,759</span></div>
<div class="c c2"><span style="letter-spacing:0.15px">00:01:32,844</span></div>
<div class="c c3"><span style="letter-spacing:0.09px">2,085</span></div>
<div class="c c4"><span style="letter-spacing:0.24px">It&#x27;s </span><span style="letter-spacing:0.01px">quite </span><span style="letter-spacing:0.24px">late!</span></div>
</div>
<div class="gl" style="top:347px"></div>
<div class="row" style="top:348px">
<div class="c c0"><span style="letter-spacing:-0.12px">20</span></div>
<div class="c c1"><span style="letter-spacing:0.15px">00:01:32,927</span></div>
<div class="c c2"><span style="letter-spacing:0.15px">00:01:34,804</span></div>
<div class="c c3"><span style="letter-spacing:0.09px">1,877</span></div>
<div class="c c4"><span style="letter-spacing:0.23px">I&#x27;ve </span><span style="letter-spacing:0.16px">just </span><span style="letter-spacing:-0.11px">finished </span><span style="letter-spacing:0.14px">work.</span></div>
</div>
<div class="gl" style="top:364px"></div>
<div class="row" style="top:365px">
<div class="c c0"><span style="letter-spacing:-0.12px">21</span></div>
<div class="c c1"><span style="letter-spacing:0.15px">00:01:35,472</span></div>
<div class="c c2"><span style="letter-spacing:0.15px">00:01:36,931</span></div>
<div class="c c3"><span style="letter-spacing:0.09px">1,459</span></div>
<div class="c c4"><span style="letter-spacing:0.05px">What </span><span style="letter-spacing:-0.21px">should </span><span style="letter-spacing:0.44px">I </span><span style="letter-spacing:-0.31px">call </span><span style="letter-spacing:-0.21px">you?</span></div>
</div>
<div class="gl" style="top:381px"></div>
<div class="row" style="top:382px">
<div class="c c0"><span style="letter-spacing:-0.12px">22</span></div>
<div class="c c1"><span style="letter-spacing:0.15px">00:01:37,015</span></div>
<div class="c c2"><span style="letter-spacing:0.15px">00:01:38,641</span></div>
<div class="c c3"><span style="letter-spacing:0.09px">1,626</span></div>
<div class="c c4"><span style="letter-spacing:-0.16px">You </span><span style="letter-spacing:-0.2px">can </span><span style="letter-spacing:-0.31px">call </span><span style="letter-spacing:-0.45px">me </span><span style="letter-spacing:-0.09px">Mrs. </span><span style="letter-spacing:-0.15px">Suen.</span></div>
</div>
<div class="gl" style="top:398px"></div>
<div class="row" style="top:399px">
<div class="c c0"><span style="letter-spacing:-0.12px">23</span></div>
<div class="c c1"><span style="letter-spacing:0.15px">00:01:38,725</span></div>
<div class="c c2"><span style="letter-spacing:0.15px">00:01:40,643</span></div>
<div class="c c3"><span style="letter-spacing:0.09px">1,918</span></div>
<div class="c c4"><span style="letter-spacing:0.13px">- </span><span style="letter-spacing:-0.16px">And </span><span style="letter-spacing:0.11px">you?&lt;br </span><span style="letter-spacing:0.7px">/&gt;- </span><span style="letter-spacing:-0.24px">My </span><span style="letter-spacing:-0.19px">husband&#x27;s </span><span style="letter-spacing:-0.32px">name </span><span style="letter-spacing:-0.33px">is </span><span style="letter-spacing:-0.07px">Chan.</span></div>
</div>
<div class="gl" style="top:415px"></div>
<div class="row" style="top:416px">
<div class="c c0"><span style="letter-spacing:-0.12px">24</span></div>
<div class="c c1"><span style="letter-spacing:0.15px">00:01:40,727</span></div>
<div class="c c2"><span style="letter-spacing:0.15px">00:01:43,855</span></div>
<div class="c c3"><span style="letter-spacing:0.09px">3,128</span></div>
<div class="c c4"><span style="letter-spacing:0.13px">- </span><span style="letter-spacing:-0.4px">Call </span><span style="letter-spacing:-0.45px">me </span><span style="letter-spacing:-0.07px">when </span><span style="letter-spacing:0.05px">you </span><span style="letter-spacing:0.12px">decide.&lt;br </span><span style="letter-spacing:0.7px">/&gt;- </span><span style="letter-spacing:0.44px">I </span><span style="letter-spacing:-0.07px">will.</span></div>
</div>
<div class="gl" style="top:432px"></div>
<div class="row" style="top:433px">
<div class="c c0"><span style="letter-spacing:-0.12px">25</span></div>
<div class="c c1"><span style="letter-spacing:0.15px">00:01:43,938</span></div>
<div class="c c2"><span style="letter-spacing:0.15px">00:01:45,815</span></div>
<div class="c c3"><span style="letter-spacing:0.09px">1,877</span></div>
<div class="c c4"><span style="letter-spacing:-0.39px">Did </span><span style="letter-spacing:0.05px">you </span><span style="letter-spacing:0.12px">write </span><span style="letter-spacing:-0.07px">down </span><span style="letter-spacing:-0.24px">my </span><span style="letter-spacing:-0.35px">number?</span></div>
</div>
<div class="gl" style="top:449px"></div>
<div class="row" style="top:450px">
<div class="c c0"><span style="letter-spacing:-0.12px">26</span></div>
<div class="c c1"><span style="letter-spacing:0.15px">00:01:45,899</span></div>
<div class="c c2"><span style="letter-spacing:0.15px">00:01:47,150</span></div>
<div class="c c3"><span style="letter-spacing:0.09px">1,251</span></div>
<div class="c c4"><span style="letter-spacing:-0.01px">Yes, </span><span style="letter-spacing:0.44px">I </span><span style="letter-spacing:0.06px">did.</span></div>
</div>
<div class="gl" style="top:466px"></div>
<div class="row" style="top:467px">
<div class="c c0"><span style="letter-spacing:-0.12px">27</span></div>
<div class="c c1"><span style="letter-spacing:0.15px">00:01:47,233</span></div>
<div class="c c2"><span style="letter-spacing:0.15px">00:01:48,943</span></div>
<div class="c c3"><span style="letter-spacing:0.09px">1,710</span></div>
<div class="c c4"><span style="letter-spacing:-0.09px">Fine. </span><span style="letter-spacing:-0.02px">I&#x27;ll </span><span style="letter-spacing:-0.2px">see </span><span style="letter-spacing:0.05px">you </span><span style="letter-spacing:0.41px">out.</span></div>
</div>
<div class="gl" style="top:483px"></div>
<div class="vg" style="left:56px"></div>
<div class="vg" style="left:136px"></div>
<div class="vg" style="left:216px"></div>
<div class="vg" style="left:271px"></div>
<div class="vg" style="left:607px"></div>
<div class="sb"><svg class="arrow" width="17" height="17" viewBox="0 0 17 17"><polygon points="8.5,7.6 12.2,12 4.8,12" fill="#3a3a3a"/></svg>
<div class="thumb" style="top:19px">
<div class="grip" style="top:20px"></div>
<div class="grip" style="top:23px"></div>
<div class="grip" style="top:26px"></div>
</div></div>
</div>
</body></html>
